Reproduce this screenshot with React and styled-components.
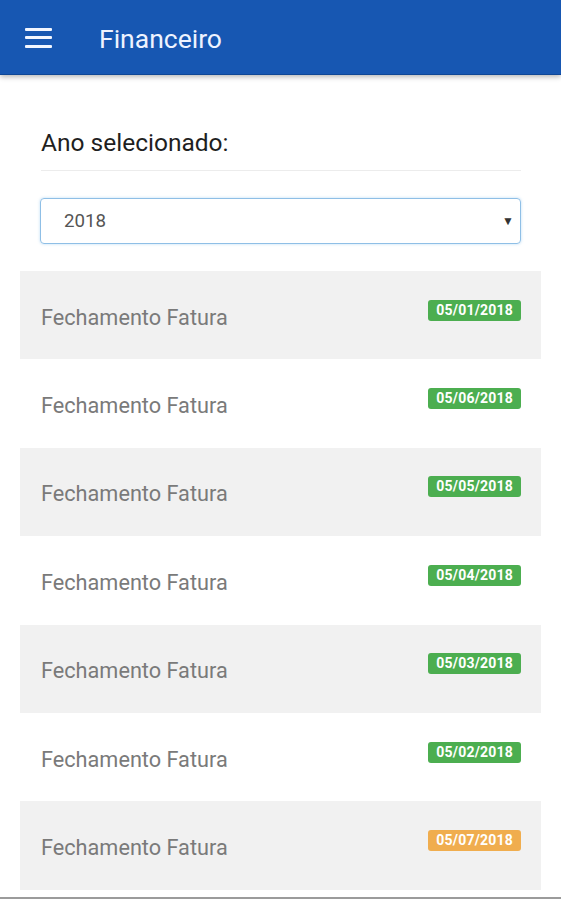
import React from "react";
import styled, { createGlobalStyle } from "styled-components";

const Global = createGlobalStyle`
  html, body { margin: 0; padding: 0; background: #fff; }
  body { font-family: Roboto, "Noto Sans", Arial, sans-serif; }
`;

const Page = styled.div`
  width: 561px;
  height: 900px;
  display: flex;
  flex-direction: column;
  overflow: hidden;
  background: #fff;
`;

const AppBar = styled.header`
  height: 75px;
  flex: none;
  background: #1757b2;
  border-bottom: 1px solid #0f4796;
  box-shadow: 0 2px 5px rgba(0, 0, 0, 0.28);
  display: flex;
  align-items: center;
  padding-left: 25px;
  box-sizing: border-box;
  position: relative;
  z-index: 1;
`;

const MenuButton = styled.div`
  width: 27px;
  height: 20px;
  display: flex;
  flex-direction: column;
  justify-content: space-between;
  margin-right: 47px;
  margin-top: 1px;
`;

const Bar = styled.span`
  display: block;
  height: 3px;
  background: #f2f6ff;
  border-radius: 1px;
`;

const Title = styled.h1`
  margin: 0;
  margin-top: 3px;
  font-size: 26.5px;
  font-weight: 400;
  color: #eef3ff;
`;

const Content = styled.main`
  flex: 1;
  padding: 0 20px;
  display: flex;
  flex-direction: column;
`;

const Filter = styled.section`
  padding: 0 20px;
  display: flex;
  flex-direction: column;
`;

const Label = styled.h2`
  margin: 52px 0 0 1px;
  font-size: 24.5px;
  font-weight: 400;
  color: #1f1f1f;
  line-height: 32px;
  padding-bottom: 11px;
  border-bottom: 1px solid #ececec;
`;

const Select = styled.div`
  margin-top: 27px;
  height: 46px;
  box-sizing: border-box;
  border: 1px solid #8fbfe6;
  border-radius: 4px;
  box-shadow: 0 0 3px rgba(102, 175, 233, 0.45);
  display: flex;
  align-items: center;
  justify-content: space-between;
  padding: 0 6px 0 23px;
  font-size: 18.7px;
  color: #555;
`;

const Caret = styled.span`
  font-size: 12px;
  color: #333;
`;

const List = styled.ul`
  list-style: none;
  margin: 27px 0 0;
  padding: 0;
`;

const Row = styled.li`
  height: 88.4px;
  background: ${(p) => (p.$shaded ? "#f1f1f1" : "#fff")};
  display: flex;
  align-items: center;
  justify-content: space-between;
  padding: 0 20px 0 21px;
  box-sizing: border-box;
`;

const RowText = styled.span`
  font-size: 21.7px;
  color: #7a7a7a;
  margin-top: 4px;
`;

const Badge = styled.span`
  font-size: 14px;
  font-weight: 700;
  color: #fff;
  background: ${(p) => (p.$tone === "warning" ? "#f0ad4e" : "#4cae50")};
  border-radius: 3px;
  padding: 2px 8px;
  line-height: 17px;
  margin-top: -10px;
  letter-spacing: 0.2px;
`;

const Footer = styled.div`
  margin-top: auto;
  height: 2px;
  background: #9b9b9b;
  margin-bottom: 1px;
`;

const rows = [
  { date: "05/01/2018" },
  { date: "05/06/2018" },
  { date: "05/05/2018" },
  { date: "05/04/2018" },
  { date: "05/03/2018" },
  { date: "05/02/2018" },
  { date: "05/07/2018", tone: "warning" },
];

export default function App() {
  return (
    <Page>
      <Global />
      <AppBar>
        <MenuButton>
          <Bar />
          <Bar />
          <Bar />
        </MenuButton>
        <Title>Financeiro</Title>
      </AppBar>
      <Content>
        <Filter>
          <Label>Ano selecionado:</Label>
          <Select>
            <span>2018</span>
            <Caret>▼</Caret>
          </Select>
        </Filter>
        <List>
          {rows.map((r, i) => (
            <Row key={i} $shaded={i % 2 === 0}>
              <RowText>Fechamento Fatura</RowText>
              <Badge $tone={r.tone}>{r.date}</Badge>
            </Row>
          ))}
        </List>
      </Content>
      <Footer />
    </Page>
  );
}
